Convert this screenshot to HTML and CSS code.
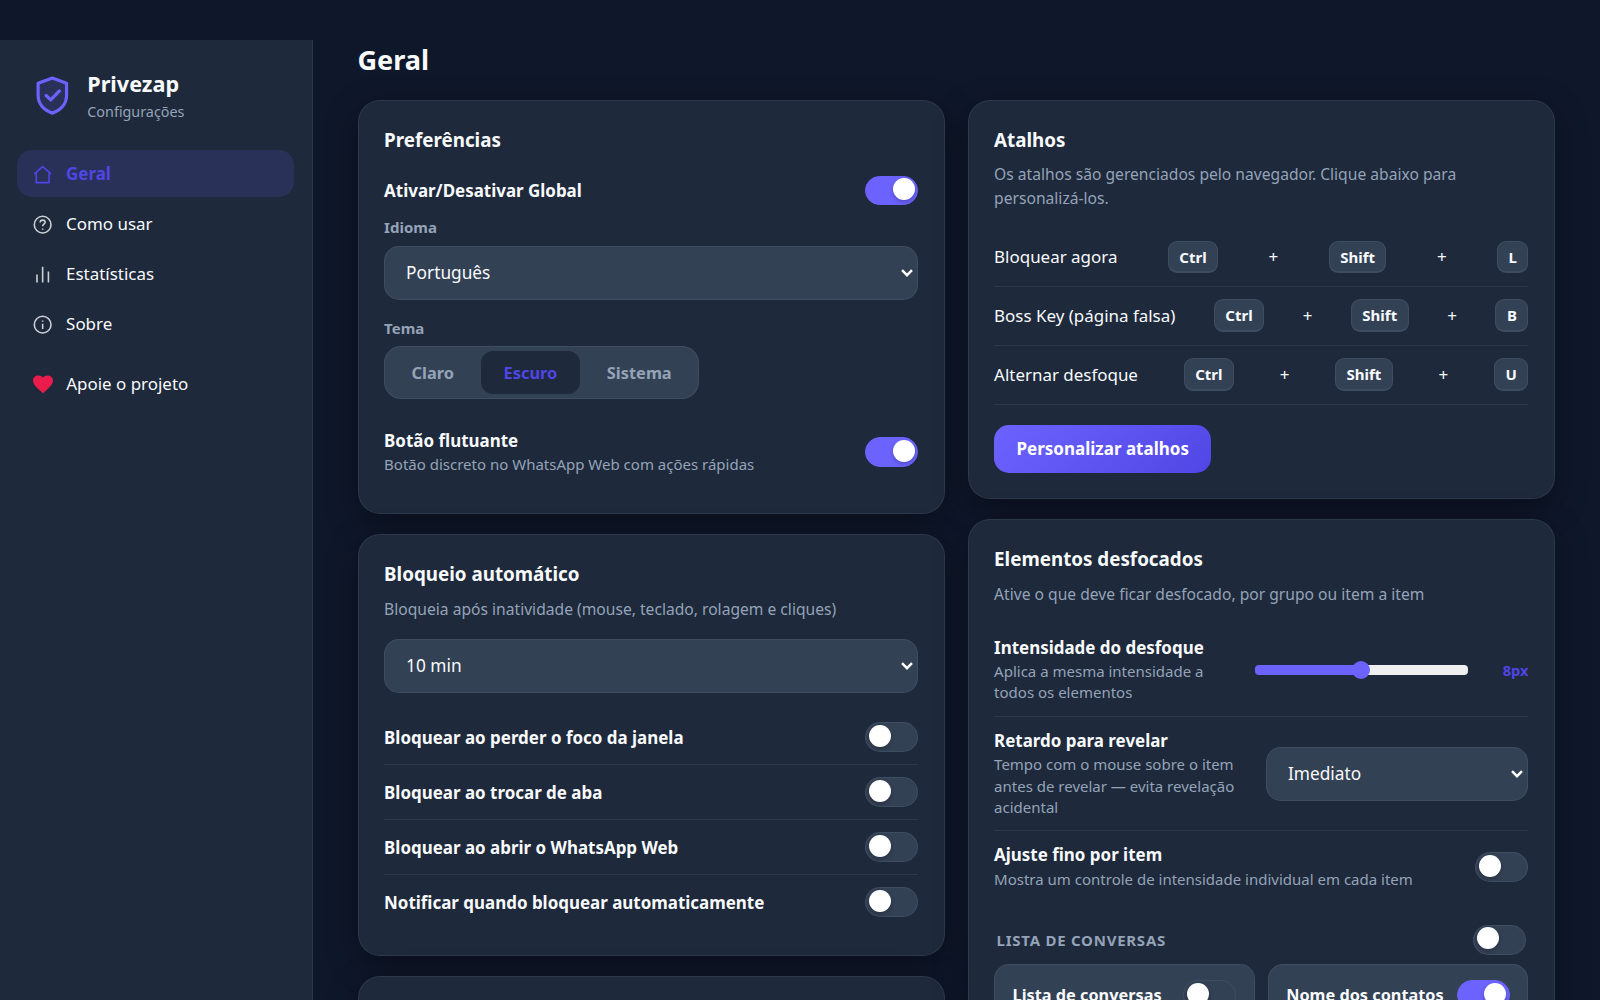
FILE: index.html
```html
<!DOCTYPE html>
<html lang="pt-BR">
<head>
<meta charset="UTF-8">
<meta name="viewport" content="width=device-width, initial-scale=1.0">
<title>Privezap - Configurações</title>
<link rel="stylesheet" href="styles.css">
</head>
<body>

<div class="layout">
    <aside class="sidebar">
        <div class="brand">
            <svg class="brand-logo" viewBox="0 0 24 24" fill="none">
                <path d="M12 2.3l8 2.9V12c0 4.9-3.4 8.4-8 10-4.6-1.6-8-5.1-8-10V5.2z" fill="#6c63ff" fill-opacity="0.15" stroke="#6c63ff" stroke-width="1.8" stroke-linejoin="round"/>
                <path d="M8.5 12.1l2.6 2.5 4.9-5.1" stroke="#6c63ff" stroke-width="1.8" stroke-linecap="round" stroke-linejoin="round"/>
            </svg>
            <div>
                <div class="brand-name">Privezap</div>
                <div class="brand-sub">Configurações</div>
            </div>
        </div>
        <nav class="nav">
            <a class="nav-item active">
                <svg class="nav-icon" viewBox="0 0 24 24"><path d="M2.6 11.2L12 3l9.4 8.2M4.8 9.6V21h14.4V9.6"/></svg>
                Geral
            </a>
            <a class="nav-item">
                <svg class="nav-icon" viewBox="0 0 24 24"><circle cx="12" cy="12" r="9.4"/><path d="M9.2 9.6c0-1.7 1.2-2.7 2.8-2.7s2.8 1 2.8 2.5c0 2-2.8 2.2-2.8 4.4M12 16.2v1.6"/></svg>
                Como usar
            </a>
            <a class="nav-item">
                <svg class="nav-icon" viewBox="0 0 24 24"><path d="M5.6 20.8v-9M12 20.8V3M18.5 20.8V8.4"/></svg>
                Estatísticas
            </a>
            <a class="nav-item">
                <svg class="nav-icon" viewBox="0 0 24 24"><circle cx="12" cy="12" r="9.4"/><path d="M12 11v6M12 7.2v1.6"/></svg>
                Sobre
            </a>
            <a class="nav-item support">
                <svg class="heart" viewBox="0 0 24 24"><path d="M12 21.3l-1.5-1.3C5.4 15.4 2 12.3 2 8.5 2 5.4 4.4 3.4 7.5 3.4c1.7 0 3.4.7 4.5 2 1.1-1.3 2.8-2 4.5-2 3.1 0 5.5 2 5.5 5.1 0 3.8-3.4 6.9-8.5 11.5z"/></svg>
                Apoie o projeto
            </a>
        </nav>
    </aside>

    <main class="main">
        <h1>Geral</h1>
        <div class="columns">
            <div class="column">
                <section class="card">
                    <h2>Preferências</h2>
                    <div class="row">
                        <div class="row-title">Ativar/Desativar Global</div>
                        <span class="toggle on"></span>
                    </div>
                    <div class="field">
                        <label>Idioma</label>
                        <select><option>Português</option></select>
                    </div>
                    <div class="field">
                        <label>Tema</label>
                        <div class="segmented">
                            <button>Claro</button>
                            <button class="active">Escuro</button>
                            <button>Sistema</button>
                        </div>
                    </div>
                    <div class="row">
                        <div>
                            <div class="row-title">Botão flutuante</div>
                            <div class="row-desc">Botão discreto no WhatsApp Web com ações rápidas</div>
                        </div>
                        <span class="toggle on"></span>
                    </div>
                </section>

                <section class="card">
                    <h2>Bloqueio automático</h2>
                    <p class="sub">Bloqueia após inatividade (mouse, teclado, rolagem e cliques)</p>
                    <div class="field">
                        <select><option>10 min</option></select>
                    </div>
                    <div class="row line">
                        <div class="row-title">Bloquear ao perder o foco da janela</div>
                        <span class="toggle"></span>
                    </div>
                    <div class="row line">
                        <div class="row-title">Bloquear ao trocar de aba</div>
                        <span class="toggle"></span>
                    </div>
                    <div class="row line">
                        <div class="row-title">Bloquear ao abrir o WhatsApp Web</div>
                        <span class="toggle"></span>
                    </div>
                    <div class="row">
                        <div class="row-title">Notificar quando bloquear automaticamente</div>
                        <span class="toggle"></span>
                    </div>
                </section>

                <section class="card card-next"></section>
            </div>

            <div class="column">
                <section class="card">
                    <h2>Atalhos</h2>
                    <p class="sub">Os atalhos são gerenciados pelo navegador. Clique abaixo para personalizá-los.</p>
                    <div class="shortcut"><span>Bloquear agora</span><kbd>Ctrl</kbd><i>+</i><kbd>Shift</kbd><i>+</i><kbd>L</kbd></div>
                    <div class="shortcut"><span>Boss Key (página falsa)</span><kbd>Ctrl</kbd><i>+</i><kbd>Shift</kbd><i>+</i><kbd>B</kbd></div>
                    <div class="shortcut"><span>Alternar desfoque</span><kbd>Ctrl</kbd><i>+</i><kbd>Shift</kbd><i>+</i><kbd>U</kbd></div>
                    <button class="primary-btn">Personalizar atalhos</button>
                </section>

                <section class="card">
                    <h2>Elementos desfocados</h2>
                    <p class="sub">Ative o que deve ficar desfocado, por grupo ou item a item</p>
                    <div class="row line">
                        <div class="intensity-text">
                            <div class="row-title">Intensidade do desfoque</div>
                            <div class="row-desc">Aplica a mesma intensidade a todos os elementos</div>
                        </div>
                        <div class="slider">
                            <input type="range" min="0" max="16" value="8">
                            <span class="slider-value">8px</span>
                        </div>
                    </div>
                    <div class="row line">
                        <div class="delay-text">
                            <div class="row-title">Retardo para revelar</div>
                            <div class="row-desc">Tempo com o mouse sobre o item antes de revelar — evita revelação acidental</div>
                        </div>
                        <select class="delay-select"><option>Imediato</option></select>
                    </div>
                    <div class="row">
                        <div>
                            <div class="row-title">Ajuste fino por item</div>
                            <div class="row-desc">Mostra um controle de intensidade individual em cada item</div>
                        </div>
                        <span class="toggle"></span>
                    </div>
                    <div class="group-head">
                        <span>LISTA DE CONVERSAS</span>
                        <span class="toggle"></span>
                    </div>
                    <div class="items">
                        <div class="item">Lista de conversas<span class="toggle"></span></div>
                        <div class="item">Nome dos contatos<span class="toggle on"></span></div>
                    </div>
                </section>
            </div>
        </div>
    </main>
</div>

</body>
</html>
```
FILE: styles.css
```css
:root {
    --bg: #0f172a;
    --card: #1e293b;
    --panel: #334155;
    --border: rgba(148, 163, 184, 0.13);
    --text: #f8fafc;
    --muted: #94a3b8;
    --accent: #6c63ff;
    --accent-dark: #4f46e5;
}

* {
    box-sizing: border-box;
}

body {
    margin: 0;
    height: 100vh;
    overflow: hidden;
    background: var(--bg);
    color: var(--text);
    font-family: "Noto Sans", sans-serif;
    font-size: 16.95px;
}

.layout {
    display: flex;
    height: 100%;
    padding-top: 40px;
}

/* Sidebar */
.sidebar {
    width: 313px;
    flex-shrink: 0;
    padding: 29px 18px 0 17px;
    background: var(--card);
    border-right: 1px solid var(--border);
}

.brand {
    display: flex;
    align-items: center;
    gap: 13.6px;
    padding-left: 14px;
    margin-bottom: 28px;
}

.brand-logo {
    width: 42.7px;
    height: 42.7px;
}

.brand-name {
    font-size: 21.6px;
    font-weight: 700;
    line-height: 30px;
}

.brand-sub {
    margin-top: 3px;
    font-size: 14.35px;
    line-height: 20px;
    color: var(--muted);
}

.nav {
    display: flex;
    flex-direction: column;
    gap: 3px;
}

.nav-item {
    display: flex;
    align-items: center;
    gap: 12.4px;
    height: 47px;
    padding: 0 15.4px;
    border-radius: 15px;
}

.nav-item.active {
    background: rgba(108, 99, 255, 0.15);
    color: var(--accent-dark);
    font-weight: 700;
}

.nav-icon {
    width: 21.3px;
    height: 21.3px;
    margin-top: 2px;
    fill: none;
    stroke: currentColor;
    stroke-width: 1.8;
    opacity: 0.8;
}

.active .nav-icon {
    opacity: 1;
}

.support {
    margin-top: 10px;
}

.heart {
    width: 24px;
    height: 24px;
    margin: 1px -1.3px 0;
    fill: #ea1c4b;
}

/* Content */
.main {
    flex: 1;
    padding: 0 45px 0 44.5px;
}

h1 {
    margin: 0;
    padding: 1px 0 21px;
    font-size: 27.1px;
    line-height: 38px;
}

.columns {
    display: grid;
    grid-template-columns: 1fr 1fr;
    gap: 22.5px;
}

.column {
    display: flex;
    flex-direction: column;
    gap: 20px;
}

.card {
    padding: 25.6px;
    background: var(--card);
    border: 1px solid var(--border);
    border-radius: 22px;
    box-shadow: 0 10px 32px rgba(0, 0, 0, 0.35);
}

.card-next {
    height: 200px;
}

h2 {
    margin: 0 0 10.9px;
    font-size: 18.8px;
    line-height: 26px;
}

.sub {
    margin: 0 0 17.5px;
    font-size: 15.64px;
    line-height: 23.5px;
    color: var(--muted);
}

.row {
    display: flex;
    align-items: center;
    justify-content: space-between;
    padding: 12.1px 0;
}

.line {
    border-bottom: 1px solid var(--border);
}

.row-title {
    font-weight: 700;
    line-height: 23.3px;
}

.row-desc {
    margin-top: 2.1px;
    font-size: 15px;
    line-height: 21.3px;
    color: var(--muted);
}

.toggle {
    width: 53px;
    height: 29.8px;
    flex-shrink: 0;
    padding: 1.7px 2.7px;
    background: var(--panel);
    border: 1px solid var(--border);
    border-radius: 15px;
}

.toggle::before {
    content: "";
    display: block;
    width: 22px;
    height: 22px;
    border-radius: 50%;
    background: #fff;
    box-shadow: 0 2px 4px rgba(0, 0, 0, 0.25);
}

.toggle.on {
    background: var(--accent);
    border-color: var(--accent);
}

.toggle.on::before {
    margin-left: auto;
}

.field {
    margin-bottom: 17.6px;
}

label {
    display: block;
    margin-bottom: 8px;
    font-size: 15px;
    font-weight: 700;
    line-height: 20.5px;
    color: var(--muted);
}

select {
    -webkit-appearance: none;
    appearance: none;
    display: block;
    width: 100%;
    height: 54px;
    padding: 0 21px;
    background: var(--panel) url("data:image/svg+xml,%3Csvg xmlns='http://www.w3.org/2000/svg' width='12' height='8' fill='none' stroke='white' stroke-width='2.4'%3E%3Cpath d='M1 1.2L6 6.2L11 1.2'/%3E%3C/svg%3E") no-repeat right 4.5px center;
    border: 1px solid var(--border);
    border-radius: 15px;
    color: var(--text);
    font-family: inherit;
    font-size: 17.3px;
}

.segmented {
    display: inline-flex;
    gap: 4.5px;
    padding: 4px;
    vertical-align: top;
    background: var(--panel);
    border: 1px solid var(--border);
    border-radius: 17px;
}

.segmented button {
    height: 43px;
    padding: 0 22.5px;
    background: none;
    border: none;
    border-radius: 12px;
    color: var(--muted);
    font-family: inherit;
    font-size: 16.4px;
    font-weight: 700;
}

.segmented .active {
    background: var(--card);
    color: var(--accent-dark);
}

/* Shortcuts */
.shortcut {
    display: flex;
    align-items: center;
    justify-content: space-between;
    padding: 12.6px 0;
    border-bottom: 1px solid var(--border);
}

.shortcut i {
    font-style: normal;
}

kbd {
    height: 32.7px;
    padding: 0 10.5px;
    background: var(--panel);
    border: 1px solid var(--border);
    border-bottom-width: 2px;
    border-radius: 9px;
    font-family: inherit;
    font-size: 15px;
    font-weight: 700;
    line-height: 30px;
}

.primary-btn {
    display: block;
    height: 48px;
    margin-top: 20px;
    padding: 0 22.4px;
    background: linear-gradient(135deg, var(--accent), var(--accent-dark));
    border: none;
    border-radius: 15px;
    color: #fff;
    font-family: inherit;
    font-size: 17px;
    font-weight: 700;
}

/* Blur options */
.intensity-text {
    width: 230px;
}

.delay-text {
    width: 252px;
}

.delay-select {
    width: 262.5px;
}

.slider {
    display: flex;
    align-items: center;
    width: 273.5px;
}

.slider-value {
    flex: 1;
    text-align: right;
    color: var(--accent-dark);
    font-size: 14.6px;
    font-weight: 700;
}

input[type="range"] {
    -webkit-appearance: none;
    width: 213px;
    height: 19px;
    margin: 0;
    background: none;
}

input[type="range"]::-webkit-slider-runnable-track {
    height: 10px;
    border-radius: 4px;
    background: linear-gradient(to right, var(--accent) 50%, #efefef 50%);
}

input[type="range"]::-webkit-slider-thumb {
    -webkit-appearance: none;
    width: 18px;
    height: 18px;
    margin-top: -4px;
    border-radius: 50%;
    background: var(--accent);
}

.group-head {
    display: flex;
    align-items: center;
    justify-content: space-between;
    margin-top: 22.5px;
    padding: 0 2.5px;
    color: var(--muted);
    font-size: 15px;
    font-weight: 700;
    letter-spacing: 0.75px;
}

.items {
    display: grid;
    grid-template-columns: 1fr 1fr;
    gap: 12.8px;
    margin-top: 9.5px;
}

.item {
    display: flex;
    align-items: center;
    justify-content: space-between;
    padding: 15px 17.5px;
    background: var(--panel);
    border: 1px solid var(--border);
    border-radius: 15px;
    font-size: 16.3px;
    font-weight: 700;
}
```
